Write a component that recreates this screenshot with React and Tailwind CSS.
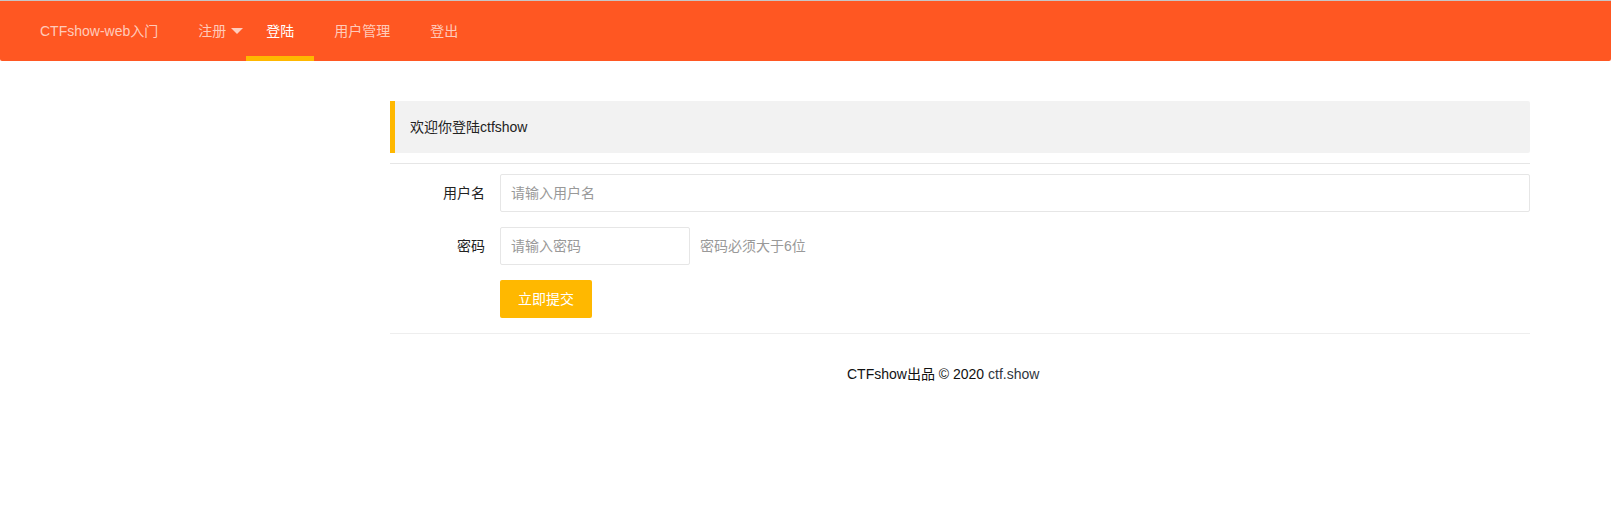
import React from 'react';

const navItems = [
  { label: 'CTFshow-web入门' },
  { label: '注册', more: true },
  { label: '登陆', active: true },
  { label: '用户管理' },
  { label: '登出' },
];

export default function App() {
  return (
    <div className="min-h-[531px] bg-white text-sm text-[#333] font-['Liberation_Sans','Noto_Sans_CJK_SC',sans-serif]">
      <div className="h-px bg-[#c6c6c6]" />

      {/* Nav */}
      <nav className="h-[60px] bg-[#FF5722] px-5 flex rounded-b-[2px]">
        {navItems.map(item => (
          <div key={item.label} className="relative">
            <a
              className={`block px-5 leading-[60px] ${item.active ? 'text-white' : 'text-white/70'}`}
            >
              {item.label}
            </a>
            {item.more && (
              <span className="absolute right-[3px] top-1/2 -mt-[3px] w-0 h-0 border-t-[6px] border-x-[6px] border-x-transparent border-t-white/70" />
            )}
            {item.active && <span className="absolute left-0 right-0 bottom-0 h-[5px] bg-[#FFB800]" />}
          </div>
        ))}
      </nav>

      {/* Content */}
      <div className="ml-[390px] w-[1140px] pt-10">
        <blockquote className="mb-2.5 p-[15px] leading-[22px] border-l-[5px] border-[#FFB800] bg-[#f2f2f2] rounded-r-[2px] text-[#222]">
          欢迎你登陆ctfshow
        </blockquote>

        <hr className="my-2.5 border-0 h-px bg-[#e6e6e6]" />

        <form>
          <div className="flex mb-[15px]">
            <label className="w-[110px] shrink-0 px-[15px] py-[9px] leading-5 text-right text-[#222]">用户名</label>
            <input
              placeholder="请输入用户名"
              className="flex-1 h-[38px] px-2.5 border border-[#e6e6e6] rounded-[2px] outline-none placeholder:text-[#999]"
            />
          </div>

          <div className="flex mb-[15px]">
            <label className="w-[110px] shrink-0 px-[15px] py-[9px] leading-5 text-right text-[#222]">密码</label>
            <input
              placeholder="请输入密码"
              className="w-[190px] h-[38px] px-2.5 border border-[#e6e6e6] rounded-[2px] outline-none placeholder:text-[#999]"
            />
            <div className="ml-2.5 py-[9px] leading-5 text-[#999]">密码必须大于6位</div>
          </div>

          <div className="flex mb-[15px] pl-[110px]">
            <button
              type="button"
              className="h-[38px] px-[18px] bg-[#FFB800] text-white rounded-[2px]"
            >
              立即提交
            </button>
          </div>
        </form>

        <hr className="border-0 h-px bg-[#eeeeee]" />

        <div className="mt-[30px] pl-[457px] leading-5 text-[#111]">
          CTFshow出品 © 2020 <a className="text-[#2f3640]">ctf.show</a>
        </div>
      </div>
    </div>
  );
}
